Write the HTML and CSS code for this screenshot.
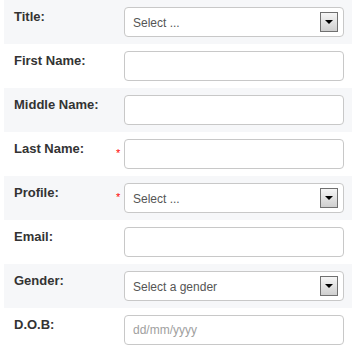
FILE: index.html
```html
<!DOCTYPE html>
<html>
<head>
<meta charset="utf-8">
<link rel="stylesheet" href="styles.css">
</head>
<body>
<div class="form">
  <div class="row alt">
    <div class="label">Title:</div><div class="star"></div>
    <div class="field select"><span class="val">Select ...</span><span class="arrow"></span></div>
  </div>
  <div class="row">
    <div class="label">First Name:</div><div class="star"></div>
    <input class="field" type="text">
  </div>
  <div class="row alt">
    <div class="label">Middle Name:</div><div class="star"></div>
    <input class="field" type="text">
  </div>
  <div class="row">
    <div class="label">Last Name:</div><div class="star">*</div>
    <input class="field" type="text">
  </div>
  <div class="row alt">
    <div class="label">Profile:</div><div class="star">*</div>
    <div class="field select"><span class="val">Select ...</span><span class="arrow"></span></div>
  </div>
  <div class="row">
    <div class="label">Email:</div><div class="star"></div>
    <input class="field" type="text">
  </div>
  <div class="row alt">
    <div class="label">Gender:</div><div class="star"></div>
    <div class="field select"><span class="val">Select a gender</span><span class="arrow"></span></div>
  </div>
  <div class="row">
    <div class="label">D.O.B:</div><div class="star"></div>
    <input class="field" type="text" placeholder="dd/mm/yyyy">
  </div>
</div>
</body>
</html>
```
FILE: styles.css
```css
html, body {
  margin: 0;
  padding: 0;
  background: #fff;
}
.form {
  padding-left: 4px;
  font-family: "Liberation Sans", Arial, sans-serif;
}
.row {
  display: flex;
  height: 44px;
  box-sizing: border-box;
}
.row.alt {
  background: #f6f7f9;
}
.label {
  width: 102px;
  padding-left: 10px;
  padding-top: 9px;
  font-size: 13px;
  line-height: 15px;
  font-weight: bold;
  color: #333;
}
.star {
  width: 8px;
  color: #f00;
  font-size: 11px;
  line-height: 11px;
  padding-top: 16px;
  box-sizing: border-box;
}
.field {
  width: 220px;
  height: 30px;
  margin-top: 7px;
  box-sizing: border-box;
  border: 1px solid #c8c8c8;
  border-radius: 4px;
  background: #fff;
  font-family: "Liberation Sans", Arial, sans-serif;
  font-size: 12px;
  color: #555;
  padding: 0 8px;
  outline: none;
}
.field::placeholder {
  color: #a0a0a0;
}
.select {
  display: flex;
  align-items: center;
  padding-right: 5px;
}
.val {
  flex: 1;
  padding-top: 1px;
}
.arrow {
  width: 18px;
  height: 20px;
  box-sizing: border-box;
  border: 1px solid #707070;
  background: linear-gradient(#f6f6f6, #cfcfcf);
  display: flex;
  align-items: center;
  justify-content: center;
}
.arrow::after {
  content: "";
  width: 0;
  height: 0;
  border-left: 4px solid transparent;
  border-right: 4px solid transparent;
  border-top: 4px solid #000;
}
```
